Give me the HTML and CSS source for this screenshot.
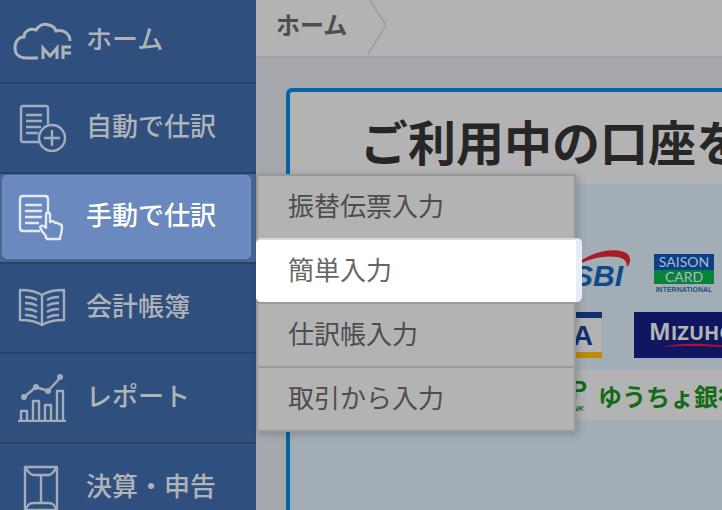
FILE: index.html
```html
<!DOCTYPE html>
<html lang="ja">
<head>
    <meta charset="UTF-8">
    <meta name="viewport" content="width=device-width, initial-scale=1.0">
    <title>ホーム</title>
    <link rel="stylesheet" href="styles.css">
</head>
<body>

    <nav class="sidebar">
        <ul class="menu">
            <li class="menu-item first">
                <a href="#">
                    <svg class="icon bold" width="60" height="40" viewBox="0 0 60 40">
                        <path d="M26 37H14C7 37 3 33 3 27c0-7 4-11 9-11 0-6 6-9 12-7 3-5 8-7 13-5 4 1 6 3 7 6 8-2 14 3 14 10"/>
                        <path d="M31 38V27l7 8 7-8v11M51 38V26h8M51 32h8"/>
                    </svg>
                    <span>ホーム</span>
                </a>
            </li>
            <li class="menu-item">
                <a href="#">
                    <svg class="icon" width="60" height="48" viewBox="0 0 60 48">
                        <path d="M27 38H11c-2 0-2-1-2-3V5c0-2 0-3 2-3h23c2 0 2 1 2 3v15M14 11h16M14 17h16M14 23h15M14 29h12"/>
                        <circle cx="40" cy="34" r="13"/>
                        <path d="M40 26v16M32 34h16"/>
                    </svg>
                    <span>自動で仕訳</span>
                </a>
            </li>
            <li class="menu-item active">
                <a href="#">
                    <svg class="icon" width="60" height="48" viewBox="0 0 60 48">
                        <path d="M28 38H11c-2 0-3-1-3-3V6c0-2 1-3 3-3h22c2 0 3 1 3 3v14M13 12h17M13 18h17M13 24h17M13 30h14"/>
                        <path d="M34 46v-3c-3-3-5-6-6-9 1-2 3-2 6 1V22c0-3 4-3 4 0v7c2-1 4-1 5 1 2-1 3 0 4 1 2 0 3 1 3 3 0 6-1 7-2 10v2H34"/>
                    </svg>
                    <span>手動で仕訳</span>
                </a>
                <ul class="submenu">
                    <li><a href="#">振替伝票入力</a></li>
                    <li><a href="#" class="current">簡単入力</a></li>
                    <li><a href="#">仕訳帳入力</a></li>
                    <li><a href="#">取引から入力</a></li>
                </ul>
            </li>
            <li class="menu-item">
                <a href="#">
                    <svg class="icon" width="60" height="48" viewBox="0 0 60 48">
                        <path d="M30 11C24 7 18 6 8 6v30c10 0 16 1 22 5 6-4 12-5 22-5V6C42 6 36 7 30 11v30"/>
                        <path d="M13 13c5 0 9 1 12 3M13 19c5 0 9 1 12 3M13 25c5 0 9 1 12 3M13 31c5 0 9 1 12 3M47 13c-5 0-9 1-12 3M47 19c-5 0-9 1-12 3M47 25c-5 0-9 1-12 3M47 31c-5 0-9 1-12 3"/>
                    </svg>
                    <span>会計帳簿</span>
                </a>
            </li>
            <li class="menu-item">
                <a href="#">
                    <svg class="icon" width="60" height="48" viewBox="0 0 60 48">
                        <path d="M6 47h48M9 47V37h6v10M21 47V27h6v20M33 47V31h6v16M45 47V17h6v30M12 23l12-10 12 4L48 4"/>
                        <circle class="dot" cx="12" cy="23" r="3"/>
                        <circle class="dot" cx="24" cy="13" r="3"/>
                        <circle class="dot" cx="36" cy="17" r="3"/>
                        <circle class="dot" cx="48" cy="3" r="3"/>
                    </svg>
                    <span>レポート</span>
                </a>
            </li>
            <li class="menu-item">
                <a href="#">
                    <svg class="icon" width="60" height="48" viewBox="0 0 60 48">
                        <path d="M13 3h32v43H13zM14 4c2 4 4 7 8 7h14c4 0 6-3 8-7M14 45c2-5 4-6 8-6h14c4 0 6 1 8 6M29 11v28"/>
                    </svg>
                    <span>決算・申告</span>
                </a>
            </li>
        </ul>
    </nav>

    <main class="main">
        <header class="breadcrumb">
            <a href="#">ホーム</a>
            <svg class="arrow" width="22" height="58" viewBox="0 0 22 58">
                <path d="M1-2l18 28L1 55"/>
            </svg>
        </header>

        <section class="card">
            <h1>ご利用中の口座を</h1>
            <div class="banks">
                <div class="bank-row">
                    <svg width="64" height="46" viewBox="0 0 64 46">
                        <text x="3" y="38" class="sbi">SBI</text>
                        <path d="M4 19C18 4 42-1 54 4c7 3 8 9 3 15 0-6-3-9-10-10C34 7 17 11 4 19z" fill="#a81c26"/>
                    </svg>
                    <svg width="60" height="46" viewBox="0 0 60 46">
                        <path d="M0 6h60v16H0z" fill="#0b3f86"/>
                        <path d="M0 22h60v14H0z" fill="#078236"/>
                        <text x="30" y="19" class="saison">SAISON</text>
                        <text x="30" y="34" class="saison">CARD</text>
                        <text x="30" y="44" class="international">INTERNATIONAL</text>
                    </svg>
                </div>
                <div class="bank-row">
                    <svg width="84" height="46" viewBox="0 0 84 46">
                        <path d="M0 0h84v46H0z" fill="#b3b3b3"/>
                        <path d="M0 0h84v6H0z" fill="#102f70"/>
                        <path d="M0 40h84v6H0z" fill="#bd8c08"/>
                        <text x="75" y="33" class="visa">VISA</text>
                    </svg>
                    <svg width="128" height="46" viewBox="0 0 128 46">
                        <path d="M0 0h128v46H0z" fill="#10165f"/>
                        <text x="15" y="28" class="mizuho"><tspan class="cap">M</tspan>IZUHO</text>
                        <path d="M28 35c20-5 48-4 76 1-28-2-50-3-76-1z" fill="#b3122c"/>
                    </svg>
                </div>
                <div class="bank-row">
                    <div class="yucho">
                        <svg width="50" height="50" viewBox="0 0 50 50">
                            <text x="49" y="28" class="jp">JP</text>
                            <text x="46" y="41" class="jp-bank">BANK</text>
                        </svg>
                        <span>ゆうちょ銀行</span>
                    </div>
                </div>
            </div>
        </section>
    </main>

</body>
</html>
```

FILE: styles.css
```css
* {
    box-sizing: border-box;
}

body {
    margin: 0;
    display: flex;
    height: 100vh;
    overflow: hidden;
    font-family: "Noto Sans CJK JP", sans-serif;
    background-color: #a6a8ad;
}

ul {
    list-style: none;
    margin: 0;
    padding: 0;
}

a {
    text-decoration: none;
    color: inherit;
}

svg {
    display: block;
    flex: none;
}

/* sidebar */

.sidebar {
    flex: none;
    width: 256px;
    background-color: #2f4f7f;
    color: #b0b3b8;
}

.menu-item {
    position: relative;
    height: 90px;
    border-bottom: 2px solid #27416b;
}

.menu-item.first {
    height: 84px;
}

.menu-item > a {
    display: flex;
    align-items: center;
    gap: 14px;
    height: 100%;
    padding-left: 12px;
    font-size: 26px;
    font-weight: 500;
    white-space: nowrap;
}

.menu-item > a span {
    padding-bottom: 8px;
}

.menu-item.active {
    background-color: #4a6590;
    padding: 1px 5px 3px 2px;
}

.menu-item.active > a {
    padding-left: 9px;
    border: 1px solid #7391c2;
    border-radius: 5px;
    background-color: #6989bf;
    color: #fff;
}

.icon {
    fill: none;
    stroke: #a3acba;
    stroke-width: 2.4;
    stroke-linejoin: round;
}

.icon.bold {
    stroke: #b0b3b8;
    stroke-width: 3;
    stroke-linejoin: miter;
}

.active .icon {
    stroke: #e3eaf6;
}

.icon .dot {
    fill: #a3acba;
    stroke: none;
}

/* submenu */

.submenu {
    position: absolute;
    top: 0;
    left: 100%;
    z-index: 1;
    width: 320px;
    border: 2px solid #999;
    border-top: none;
    background-color: #b3b3b3;
    box-shadow: 2px 2px 8px rgba(0, 0, 0, 0.2);
}

.submenu a {
    display: flex;
    align-items: center;
    height: 64px;
    padding: 0 0 6px 30px;
    border-top: 2px solid #999;
    font-size: 26px;
    color: #4d4d4d;
}

.submenu a.current {
    margin: 0 -8px 0 -2px;
    padding-left: 32px;
    border-top: 2px solid #d9d9d9;
    border-right: 6px solid #e6edf4;
    border-radius: 5px;
    background-color: #fff;
    color: #666;
}

/* main */

.main {
    flex: 1;
    min-width: 0;
    display: flex;
    flex-direction: column;
}

.breadcrumb {
    flex: none;
    display: flex;
    align-items: center;
    gap: 20px;
    height: 58px;
    padding-left: 20px;
    border-bottom: 2px solid #a0a0a0;
    background-color: #b3b3b3;
    color: #4d4d4d;
    font-size: 24px;
    font-weight: bold;
}

.breadcrumb a {
    padding-bottom: 10px;
}

.arrow {
    fill: none;
    stroke: #a0a0a0;
    stroke-width: 2;
}

.card {
    flex: 1;
    display: flex;
    flex-direction: column;
    margin: 30px 0 0 30px;
    border: 4px solid #0064a5;
    border-right: none;
    border-bottom: none;
    border-radius: 6px 0 0 0;
    background-color: #b3b3b3;
    overflow: hidden;
}

.card h1 {
    margin: 0;
    padding: 14px 0 10px 70px;
    font-size: 48px;
    line-height: 68px;
    color: #262626;
    white-space: nowrap;
}

.banks {
    flex: 1;
    display: flex;
    flex-direction: column;
    gap: 12px;
    padding: 64px 0 0 228px;
    background-color: #a3adb6;
}

.bank-row {
    display: flex;
    gap: 32px;
}

.bank-row:first-child {
    padding-left: 52px;
    padding-bottom: 6px;
    gap: 20px;
}

.yucho {
    display: flex;
    align-items: center;
    gap: 10px;
    margin-left: 20px;
    height: 50px;
    background-color: #b3b3b3;
    color: #116b17;
    font-size: 24px;
    font-weight: bold;
    white-space: nowrap;
}

/* logo lettering */

.sbi {
    font: italic bold 30px "Liberation Sans", sans-serif;
    fill: #0d4b88;
}

.saison {
    font: 14px Lato, sans-serif;
    text-anchor: middle;
    fill: #a8bcc8;
}

.international {
    font: bold 7px "Liberation Sans", sans-serif;
    text-anchor: middle;
    fill: #284e80;
}

.visa {
    font: bold 28px "Liberation Sans", sans-serif;
    text-anchor: end;
    fill: #102f70;
}

.mizuho {
    font: bold 20px "Open Sans", sans-serif;
    fill: #b3b3b3;
}

.mizuho .cap {
    font-size: 23px;
}

.jp {
    font: bold 24px "Liberation Sans", sans-serif;
    text-anchor: end;
    fill: #116b17;
}

.jp-bank {
    font: italic bold 8px "Liberation Sans", sans-serif;
    text-anchor: end;
    fill: #116b17;
}
```
